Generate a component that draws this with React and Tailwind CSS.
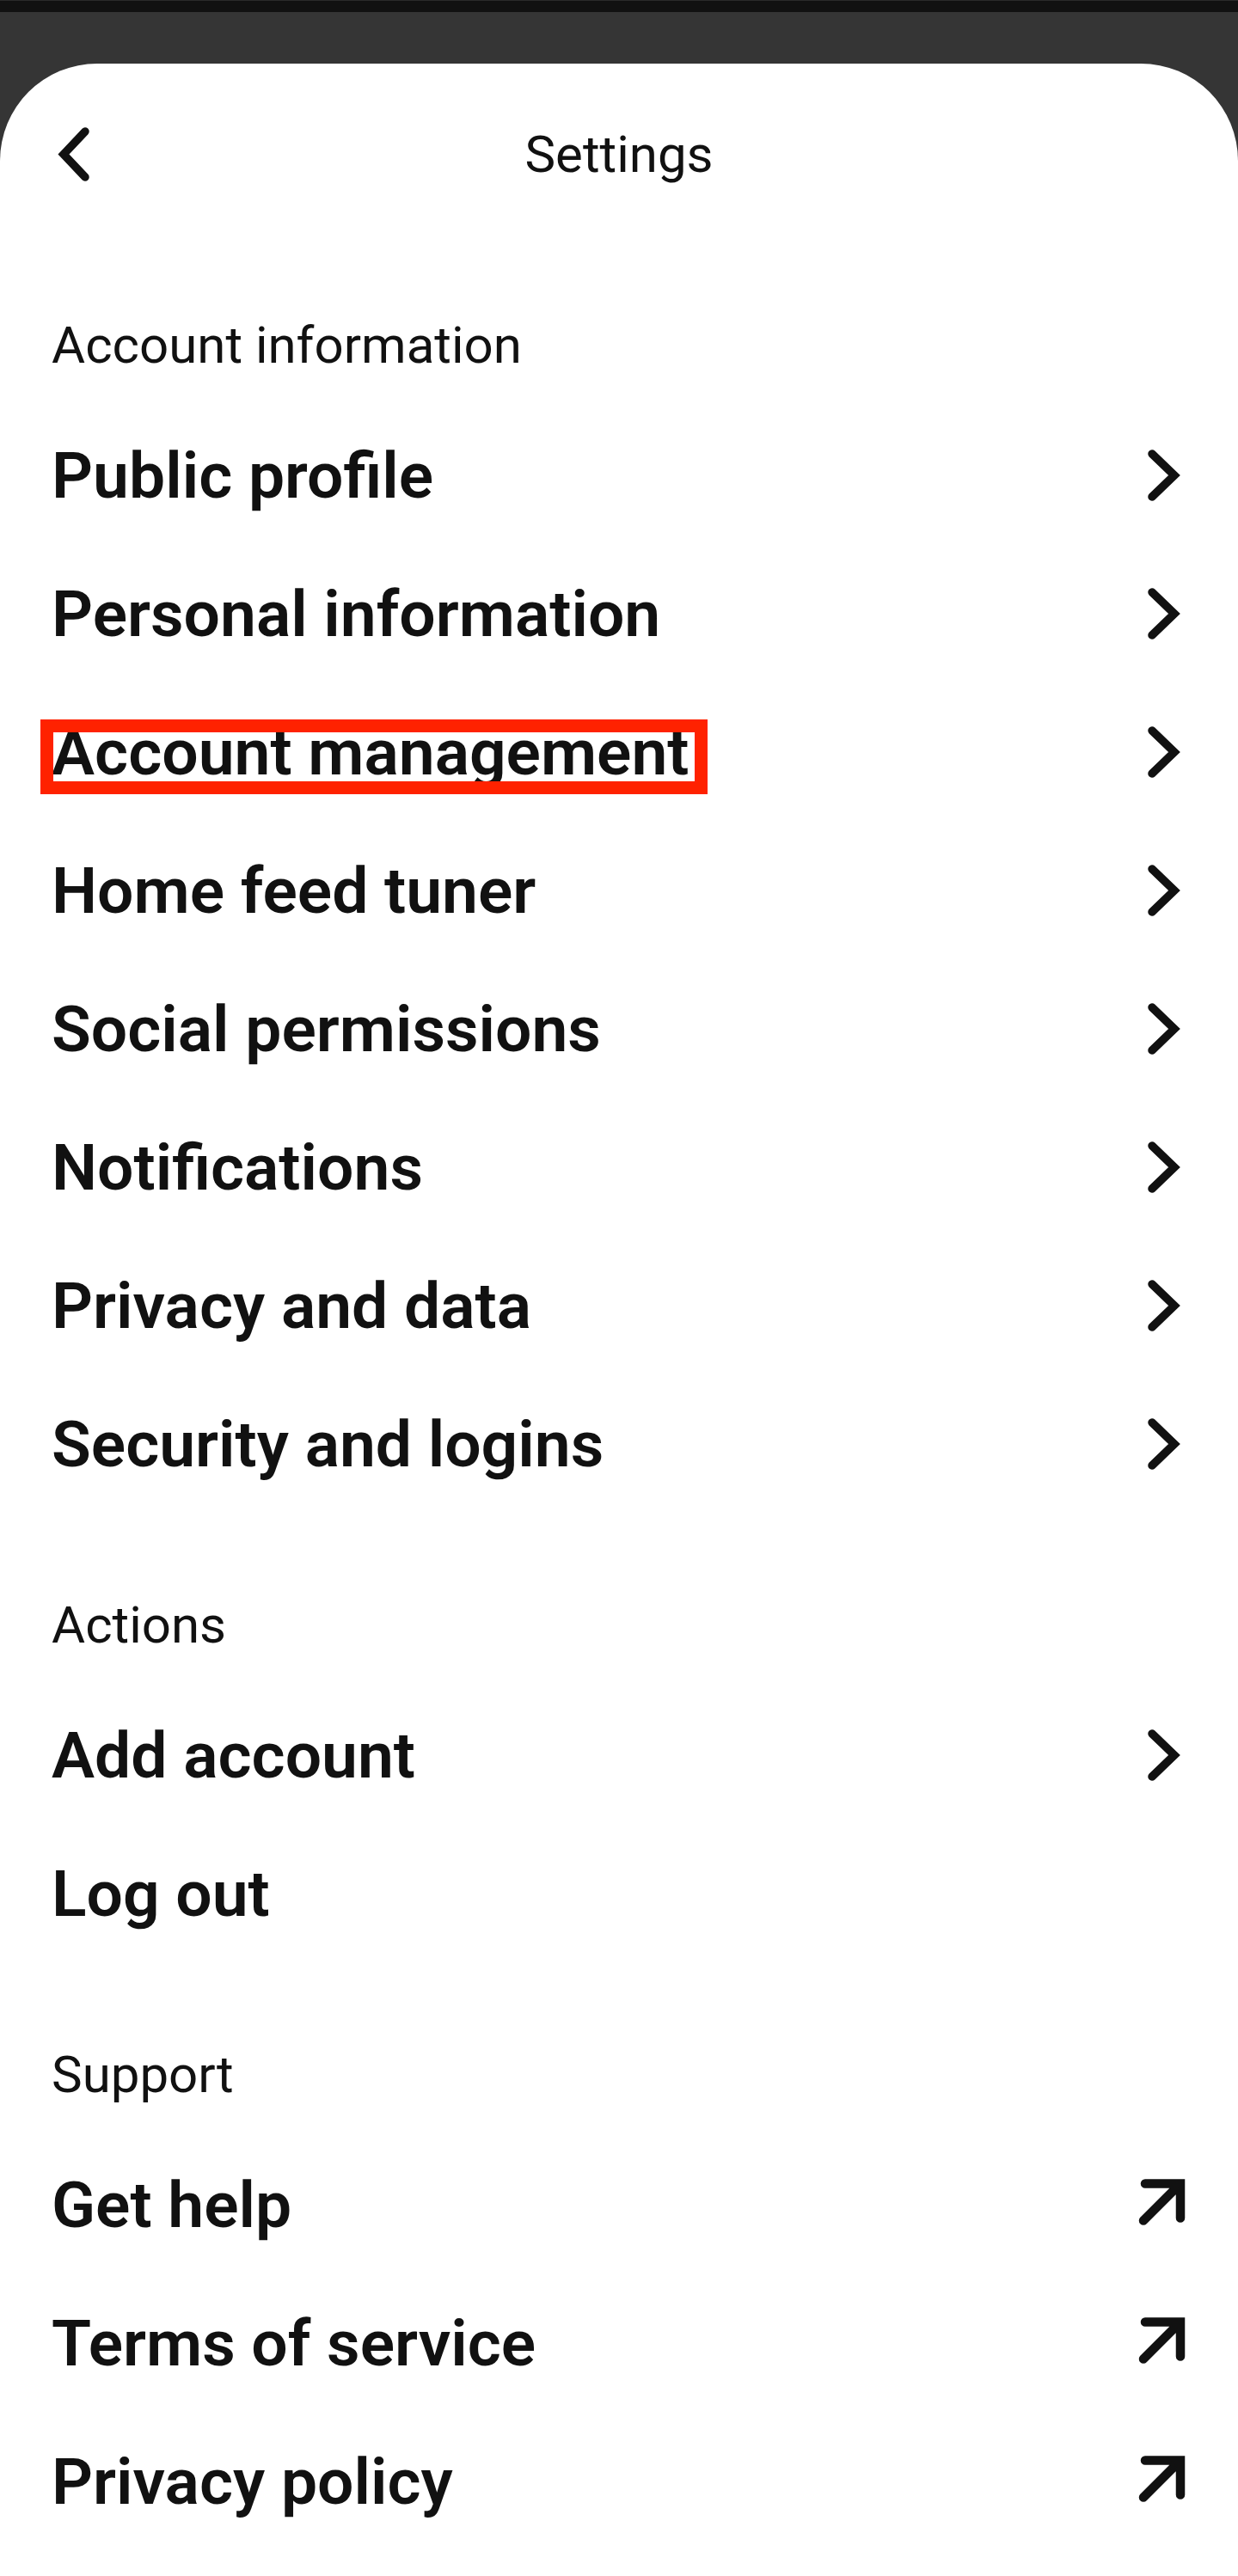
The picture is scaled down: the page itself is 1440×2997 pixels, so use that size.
import React from "react";

const font = { fontFamily: "Roboto, 'Noto Sans', Arial, sans-serif" };

function ChevronRight() {
  return (
    <svg width="50" height="70" viewBox="0 0 50 70" fill="none" className="shrink-0">
      <polyline
        points="10,10 36,35 10,60"
        stroke="#111111"
        strokeWidth="9.5"
        strokeLinecap="round"
        strokeLinejoin="miter"
      />
    </svg>
  );
}

function ArrowUpRight() {
  return (
    <svg width="60" height="70" viewBox="0 0 60 70" fill="none" className="shrink-0">
      <path
        d="M12 10.5 H53 V50.5 M53 10.5 L10 53.5"
        stroke="#111111"
        strokeWidth="10.5"
        strokeLinecap="round"
        strokeLinejoin="miter"
      />
    </svg>
  );
}

function SectionHeader({ children }) {
  return (
    <div className="h-[141px] flex items-center pl-[60px] text-[60px] leading-none text-[#111111]">
      {children}
    </div>
  );
}

function Row({ label, icon, highlight }) {
  return (
    <div className="relative h-[161px] flex items-center justify-between pl-[60px] pr-[60px]">
      <span className="text-[75px] leading-none font-semibold text-[#111111] translate-y-[1px]">
        {label}
      </span>
      {icon === "chevron" && <ChevronRight />}
      {icon === "arrow" && <ArrowUpRight />}
      {highlight && (
        <div className="absolute left-[47px] top-[43px] w-[776px] h-[87px] border-[15px] border-[#ff2200] pointer-events-none" />
      )}
    </div>
  );
}

export default function App() {
  const accountRows = [
    "Public profile",
    "Personal information",
    "Account management",
    "Home feed tuner",
    "Social permissions",
    "Notifications",
    "Privacy and data",
    "Security and logins",
  ];
  return (
    <div className="w-[1440px] min-h-[2997px] bg-white" style={font}>
      <div className="h-[14px] bg-[#111111] border-t border-[#2a2a2a]" />
      <div className="bg-[#353535] pt-[60px]">
        <div className="bg-white rounded-t-[113px] pb-[30px]">
          <div className="h-[212px] relative flex items-center justify-center">
            <div className="absolute left-[60px] top-[71px]">
              <svg width="50" height="70" viewBox="0 0 50 70" fill="none">
                <polyline
                  points="39,8 14,34.5 39,61"
                  stroke="#111111"
                  strokeWidth="9.5"
                  strokeLinecap="round"
                  strokeLinejoin="miter"
                />
              </svg>
            </div>
            <span className="text-[60px] leading-none text-[#111111]">Settings</span>
          </div>

          <div className="mt-[45px]">
            <SectionHeader>Account information</SectionHeader>
            {accountRows.map((r) => (
              <Row key={r} label={r} icon="chevron" highlight={r === "Account management"} />
            ))}
          </div>

          <div className="mt-[60px]">
            <SectionHeader>Actions</SectionHeader>
            <Row label="Add account" icon="chevron" />
            <Row label="Log out" />
          </div>

          <div className="mt-[60px]">
            <SectionHeader>Support</SectionHeader>
            <Row label="Get help" icon="arrow" />
            <Row label="Terms of service" icon="arrow" />
            <Row label="Privacy policy" icon="arrow" />
          </div>
        </div>
      </div>
    </div>
  );
}
